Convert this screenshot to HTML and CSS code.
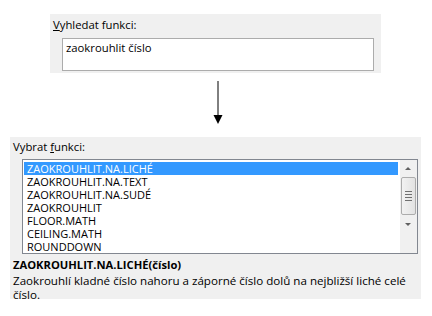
FILE: index.html
```html
<!doctype html>
<html lang="cs">

<head>
    <meta charset="UTF-8">
    <title>Vložit funkci</title>
    <link rel="stylesheet" href="styles.css">
</head>

<body>
    <div class="search">
        <p class="label"><u>V</u>yhledat funkci:</p>
        <div class="input">zaokrouhlit číslo</div>
    </div>

    <div class="arrow">
        <svg width="12" height="44" viewBox="0 0 12 44">
            <line x1="6" y1="0" x2="6" y2="36" stroke="#000" stroke-width="1"></line>
            <polygon points="1.5,34 10.5,34 6,43" fill="#000"></polygon>
        </svg>
    </div>

    <div class="pick">
        <p class="label">Vybrat <u>f</u>unkci:</p>
        <div class="listbox">
            <ul class="items">
                <li class="sel">ZAOKROUHLIT.NA.LICHÉ</li>
                <li>ZAOKROUHLIT.NA.TEXT</li>
                <li>ZAOKROUHLIT.NA.SUDÉ</li>
                <li>ZAOKROUHLIT</li>
                <li>FLOOR.MATH</li>
                <li>CEILING.MATH</li>
                <li>ROUNDDOWN</li>
            </ul>
            <div class="scroll">
                <span class="up"></span>
                <div class="thumb"><i></i><i></i><i></i><i></i></div>
                <span class="down"></span>
            </div>
        </div>
        <p class="syntax">ZAOKROUHLIT.NA.LICHÉ(číslo)</p>
        <p class="desc">Zaokrouhlí kladné číslo nahoru a záporné číslo dolů na nejbližší liché celé číslo.</p>
    </div>
</body>

</html>
```

FILE: styles.css
```css
* {
    margin: 0;
    padding: 0;
    box-sizing: border-box;
}

body {
    width: 432px;
    height: 316px;
    background: #fff;
    font-family: "Open Sans", "Liberation Sans", sans-serif;
    font-size: 11.3px;
    color: #000;
    padding-top: 14px;
}

li {
    list-style: none;
}

.search {
    margin-left: 50px;
    width: 331px;
    height: 59px;
    background: #f0f0f0;
    padding: 3px 0 0 3px;
}

.label {
    line-height: 16px;
}

.search .input {
    margin: 5px 0 0 9px;
    width: 312px;
    height: 33px;
    border: 1px solid #acacac;
    background: #fff;
    padding: 1px 0 0 3px;
    line-height: 16px;
}

.arrow {
    margin: 8px 0 0 212px;
    height: 56px;
}

.arrow svg {
    display: block;
}

.pick {
    margin-left: 10px;
    width: 411px;
    height: 162px;
    background: #f0f0f0;
    padding: 2px 0 0 3px;
}

.listbox {
    margin: 4px 0 0 9px;
    width: 396px;
    height: 95px;
    border: 1px solid #828790;
    background: #fff;
    display: flex;
    padding: 2px 0 0 1px;
}

.items {
    flex: 1;
    font-size: 11px;
    line-height: 13px;
}

.items li {
    padding-left: 3px;
    height: 13px;
    margin-right: 2px;
}

.items li.sel {
    background: #3399ff;
    color: #fff;
}

.scroll {
    width: 17px;
    margin-top: -2px;
    background: #f0f0f0;
    display: flex;
    flex-direction: column;
    align-items: center;
}

.scroll .up,
.scroll .down {
    display: block;
    height: 17px;
    width: 17px;
    position: relative;
}

.scroll .up::after,
.scroll .down::after {
    content: "";
    position: absolute;
    left: 5px;
    width: 0;
    height: 0;
    border-left: 3px solid transparent;
    border-right: 3px solid transparent;
}

.scroll .up::after {
    top: 7px;
    border-bottom: 3px solid #606060;
}

.scroll .down::after {
    top: 8px;
    border-top: 3px solid #606060;
}

.thumb {
    width: 15px;
    height: 38px;
    border: 1px solid #acacac;
    border-radius: 2px;
    background: linear-gradient(to right, #f2f2f2, #e2e2e2);
    display: flex;
    flex-direction: column;
    justify-content: center;
    align-items: center;
    gap: 1px;
}

.thumb i {
    display: block;
    width: 7px;
    height: 1px;
    background: #707070;
    margin-bottom: 1px;
}

.syntax {
    margin-top: 3px;
    font-weight: bold;
    font-size: 11.2px;
    line-height: 16px;
}

.desc {
    margin-top: 1px;
    font-size: 11.6px;
    line-height: 14px;
    width: 404px;
}
```
